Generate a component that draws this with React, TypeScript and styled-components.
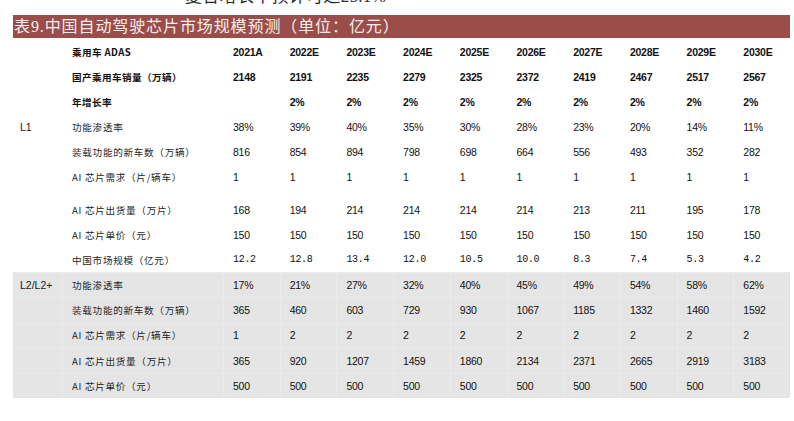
import React from "react";
import styled, { createGlobalStyle, css } from "styled-components";

const GlobalStyle = createGlobalStyle`
  html, body { margin: 0; padding: 0; background: #ffffff; }
  body { font-family: "Liberation Sans", "Noto Sans CJK SC", sans-serif; color: #1a1a1a; }
`;

const CJK = `"Noto Sans CJK SC", "Noto Sans", sans-serif`;

const Page = styled.div`
  width: 794px;
  height: 421px;
  overflow: hidden;
  padding-left: 13px;
  box-sizing: border-box;
`;

const Lead = styled.div`
  margin-top: -12px;
  height: 17px;
  line-height: 17px;
  padding-left: 172px;
  font-family: "Liberation Serif", ${CJK};
  font-size: 17px;
  letter-spacing: 0.3px;
  color: #2a2a2a;
  white-space: nowrap;
`;

const TitleBar = styled.div`
  margin-top: 10px;
  width: 777px;
  height: 23px;
  background: #9b4d49;
  color: #f7efee;
  font-family: "Liberation Serif", ${CJK};
  font-size: 16px;
  line-height: 23px;
  letter-spacing: 0.9px;
  padding-left: 1px;
  box-sizing: border-box;
  white-space: nowrap;
`;

const Table = styled.div`
  width: 777px;
  margin-top: 1px;
`;

const Section = styled.div<{ $shaded?: boolean }>`
  background: ${(p) => (p.$shaded ? "#e5e5e5" : "transparent")};
`;

const Row = styled.div<{ $h?: number; $shaded?: boolean }>`
  display: grid;
  grid-template-columns: 49px 161px repeat(10, 1fr);
  height: ${(p) => p.$h ?? 25}px;
  align-items: stretch;
  ${(p) =>
    p.$shaded &&
    css`
      box-shadow: inset 0 1px 0 #eaeaea;
    `}
`;

const Spacer = styled.div`
  height: 8px;
`;

const Cell = styled.div<{ $shaded?: boolean }>`
  display: flex;
  align-items: center;
  white-space: nowrap;
  overflow: visible;
  ${(p) =>
    p.$shaded &&
    css`
      box-shadow: inset 1px 0 0 #eaeaea;
    `}
`;

const LevelCell = styled(Cell)`
  padding-left: 7px;
  font-family: "Liberation Sans", sans-serif;
  font-size: 10.5px;
  color: #1a1a1a;
`;

const LabelCell = styled(Cell)<{ $bold?: boolean }>`
  padding-left: 10px;
  font-family: ${CJK};
  font-size: 9.6px;
  letter-spacing: ${(p) => (p.$bold ? "0.4px" : "0.7px")};
  font-weight: ${(p) => (p.$bold ? 700 : 400)};
  color: ${(p) => (p.$bold ? "#111" : "#262626")};
`;

const NumCell = styled(Cell)<{ $bold?: boolean; $mono?: boolean }>`
  padding-left: 10px;
  font-family: ${(p) => (p.$mono ? `"Liberation Mono", monospace` : `"Liberation Sans", sans-serif`)};
  font-size: ${(p) => (p.$mono ? "10px" : "10.5px")};
  letter-spacing: ${(p) => (p.$mono ? "-0.3px" : "-0.25px")};
  font-weight: ${(p) => (p.$bold ? 700 : 400)};
  color: #111;
`;

type RowData = {
  level?: string;
  label: string;
  values: string[];
  bold?: boolean;
  mono?: boolean;
};

const whiteRows: (RowData | "spacer")[] = [
  {
    label: "乘用车 ADAS",
    values: ["2021A", "2022E", "2023E", "2024E", "2025E", "2026E", "2027E", "2028E", "2029E", "2030E"],
    bold: true,
  },
  {
    label: "国产乘用车销量（万辆）",
    values: ["2148", "2191", "2235", "2279", "2325", "2372", "2419", "2467", "2517", "2567"],
    bold: true,
  },
  {
    label: "年增长率",
    values: ["", "2%", "2%", "2%", "2%", "2%", "2%", "2%", "2%", "2%"],
    bold: true,
  },
  {
    level: "L1",
    label: "功能渗透率",
    values: ["38%", "39%", "40%", "35%", "30%", "28%", "23%", "20%", "14%", "11%"],
  },
  {
    label: "装载功能的新车数（万辆）",
    values: ["816", "854", "894", "798", "698", "664", "556", "493", "352", "282"],
  },
  {
    label: "AI 芯片需求（片/辆车）",
    values: ["1", "1", "1", "1", "1", "1", "1", "1", "1", "1"],
  },
  "spacer",
  {
    label: "AI 芯片出货量（万片）",
    values: ["168", "194", "214", "214", "214", "214", "213", "211", "195", "178"],
  },
  {
    label: "AI 芯片单价（元）",
    values: ["150", "150", "150", "150", "150", "150", "150", "150", "150", "150"],
  },
  {
    label: "中国市场规模（亿元）",
    values: ["12.2", "12.8", "13.4", "12.0", "10.5", "10.0", "8.3", "7.4", "5.3", "4.2"],
    mono: true,
  },
];

const greyRows: RowData[] = [
  {
    level: "L2/L2+",
    label: "功能渗透率",
    values: ["17%", "21%", "27%", "32%", "40%", "45%", "49%", "54%", "58%", "62%"],
  },
  {
    label: "装载功能的新车数（万辆）",
    values: ["365", "460", "603", "729", "930", "1067", "1185", "1332", "1460", "1592"],
  },
  {
    label: "AI 芯片需求（片/辆车）",
    values: ["1", "2", "2", "2", "2", "2", "2", "2", "2", "2"],
  },
  {
    label: "AI 芯片出货量（万片）",
    values: ["365", "920", "1207", "1459", "1860", "2134", "2371", "2665", "2919", "3183"],
  },
  {
    label: "AI 芯片单价（元）",
    values: ["500", "500", "500", "500", "500", "500", "500", "500", "500", "500"],
  },
];

function DataRow({ row, shaded, h }: { row: RowData; shaded?: boolean; h?: number }) {
  return (
    <Row $h={h} $shaded={shaded}>
      <LevelCell>{row.level ?? ""}</LevelCell>
      <LabelCell $bold={row.bold} $shaded={shaded}>
        {row.label}
      </LabelCell>
      {row.values.map((v, i) => (
        <NumCell key={i} $bold={row.bold} $mono={row.mono} $shaded={shaded}>
          {v}
        </NumCell>
      ))}
    </Row>
  );
}

export default function App() {
  return (
    <>
      <GlobalStyle />
      <Page>
        <Lead>复合增长率预计可达25.1%</Lead>
        <TitleBar>表9.中国自动驾驶芯片市场规模预测（单位：亿元）</TitleBar>
        <Table>
          <Section>
            {whiteRows.map((r, i) =>
              r === "spacer" ? <Spacer key={i} /> : <DataRow key={i} row={r} />
            )}
          </Section>
          <Section $shaded>
            {greyRows.map((r, i) => (
              <DataRow key={i} row={r} shaded h={25.3} />
            ))}
          </Section>
        </Table>
      </Page>
    </>
  );
}
